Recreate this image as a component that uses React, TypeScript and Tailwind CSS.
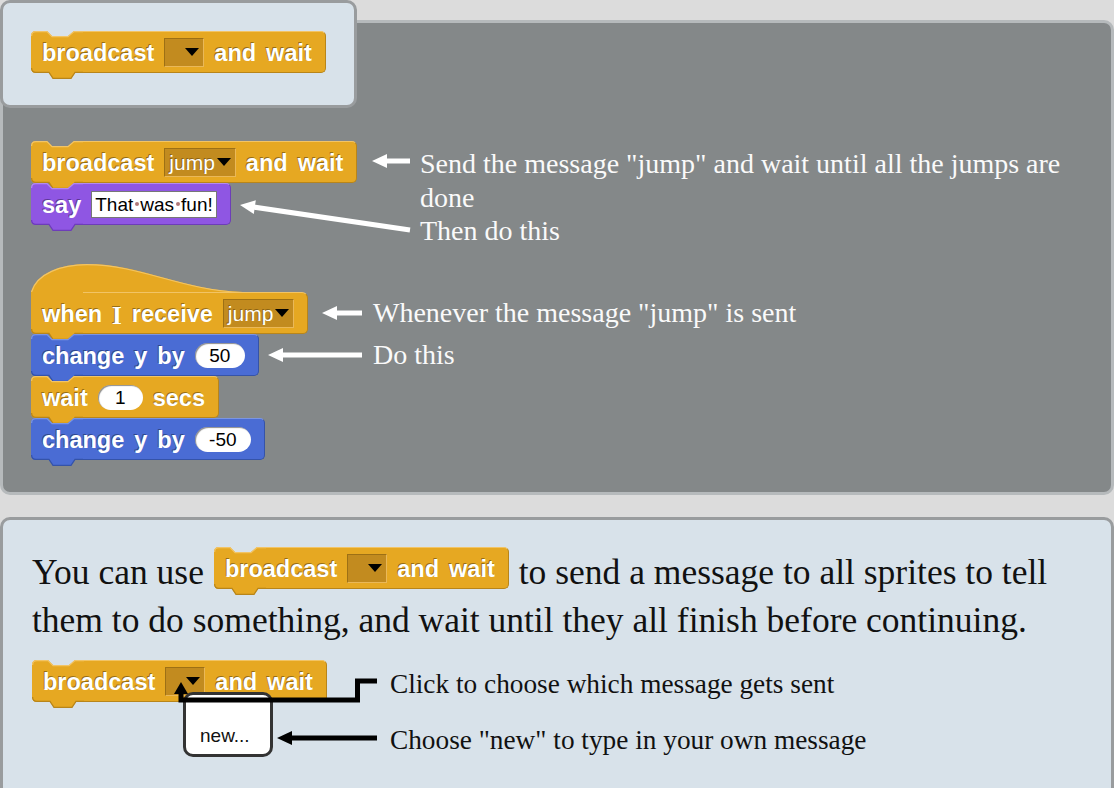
import React from "react";

type Tone = "orange" | "blue" | "purple";

const tones: Record<Tone, { fill: string; light: string; dark: string; body: string }> = {
  orange: {
    fill: "#e6a822",
    light: "#f2c465",
    dark: "#b8851a",
    body: "bg-[#e6a822] border-t border-t-[#f2c465] border-b border-b-[#b8851a] border-r border-r-[#b8851a]",
  },
  blue: {
    fill: "#4a6cd4",
    light: "#7b95e3",
    dark: "#3553a8",
    body: "bg-[#4a6cd4] border-t border-t-[#7b95e3] border-b border-b-[#3553a8] border-r border-r-[#3553a8]",
  },
  purple: {
    fill: "#8f56e3",
    light: "#b38af0",
    dark: "#6d3db8",
    body: "bg-[#8f56e3] border-t border-t-[#b38af0] border-b border-b-[#6d3db8] border-r border-r-[#6d3db8]",
  },
};

const NOTCH = "M0,5 Q0,0 5,0 H16 L21,5 H37 L43,0 H52 V42 H44 L40,48 H22 L18,42 H5 Q0,42 0,37 Z";
const FLAT = "M0,0 H52 V42 H44 L40,48 H22 L18,42 H5 Q0,42 0,37 Z";

function Block({ tone, hat = false, children }: { tone: Tone; hat?: boolean; children: React.ReactNode }) {
  const t = tones[tone];
  return (
    <div className="relative inline-flex h-[42px] items-center pl-[11px] pr-[14px]">
      {hat && (
        <svg width="212" height="29" viewBox="0 0 212 29" className="absolute left-0 bottom-[41px]">
          <path d="M0,29 L0,28 C6,9 30,0 56,0 C110,0 150,26 212,28 L212,29 Z" fill={t.fill} />
          <path d="M0.5,28 C6,9.5 30,0.7 56,0.7 C110,0.7 150,26.5 212,28.5" fill="none" stroke={t.light} strokeWidth="1.2" />
        </svg>
      )}
      <div className="absolute inset-0 flex items-start">
        <svg width="52" height="48" viewBox="0 0 52 48" className="shrink-0">
          <path d={hat ? FLAT : NOTCH} fill={t.fill} />
          {!hat && (
            <path d="M0.6,5 Q0.6,0.6 5,0.6 H16 L21,5.6 H37 L43,0.6 H52" fill="none" stroke={t.light} strokeWidth="1.2" />
          )}
          <path d="M0.6,37 Q0.6,41.4 5,41.4 H18 L22,47.4 H40 L44,41.4 H52" fill="none" stroke={t.dark} strokeWidth="1.2" />
        </svg>
        <div className={`h-[42px] flex-1 rounded-r-[5px] ${t.body} ${hat ? "rounded-tr-[6px]" : ""}`} />
      </div>
      <div className="relative flex items-center gap-[10px]">{children}</div>
    </div>
  );
}

function W({ children }: { children: React.ReactNode }) {
  return (
    <span className="mt-[4px] font-['Liberation_Sans',Arial,sans-serif] text-[23.5px] font-bold leading-none text-white [text-shadow:-1px_-1px_0_rgba(0,0,0,0.35)]">
      {children}
    </span>
  );
}

function Tri() {
  return (
    <svg width="14" height="8" viewBox="0 0 14 8">
      <polygon points="0,0 14,0 7,8" fill="#000" />
    </svg>
  );
}

function Drop({ label }: { label?: string }) {
  return (
    <div className="flex h-[29px] min-w-[40px] items-center justify-end gap-[2px] border border-t-[#9d7015] border-l-[#9d7015] border-b-[#eab858] border-r-[#eab858] bg-[#c28b1f] pl-[4px] pr-[4px]">
      {label && (
        <span className="font-['Liberation_Sans',Arial,sans-serif] text-[21px] leading-none text-white [text-shadow:-1px_-1px_0_rgba(0,0,0,0.3)]">
          {label}
        </span>
      )}
      <Tri />
    </div>
  );
}

function Num({ value, w }: { value: string; w: string }) {
  return (
    <div
      className={`flex h-[25px] ${w} items-center justify-center rounded-full bg-white font-['Liberation_Sans',Arial,sans-serif] text-[19px] leading-none text-black shadow-[inset_1px_1px_1px_rgba(0,0,0,0.45)]`}
    >
      {value}
    </div>
  );
}

function Dot() {
  return <span className="mx-[1.5px] inline-block h-[4px] w-[4px] rounded-full bg-[#b07878] align-middle" />;
}

function BroadcastBlock({ label }: { label?: string }) {
  return (
    <Block tone="orange">
      <W>broadcast</W>
      <Drop label={label} />
      <W>and</W>
      <W>wait</W>
    </Block>
  );
}

export default function App() {
  return (
    <div className="relative h-[788px] w-[1114px] overflow-hidden bg-[#dcdcdc] font-['Liberation_Serif','Times_New_Roman',serif]">
      <div className="pt-[20px]">
        <div className="h-[475px] rounded-[10px] border-[3px] border-[#b6babc] bg-[#848889] pl-[28px] pt-[118px]">
          <div className="flex h-[84px]">
            <div className="flex w-[389px] shrink-0 flex-col items-start">
              <BroadcastBlock label="jump" />
              <Block tone="purple">
                <W>say</W>
                <div className="flex h-[27px] items-center border border-[#777] bg-white px-[3px] font-['Liberation_Sans',Arial,sans-serif] text-[19px] leading-none text-black">
                  That<Dot />was<Dot />fun!
                </div>
              </Block>
            </div>
            <div className="mt-[6px] whitespace-nowrap text-[28px] leading-[33.5px] text-[#fafafa]">
              <div>Send the message "jump" and wait until all the jumps are</div>
              <div>done</div>
              <div>Then do this</div>
            </div>
          </div>

          <div className="mt-[67px] flex">
            <div className="flex w-[342px] shrink-0 flex-col items-start">
              <Block tone="orange" hat>
                <W>when</W>
                <span className="mt-[4px] font-['Liberation_Serif',serif] text-[25px] font-bold leading-none text-white [text-shadow:-1px_-1px_0_rgba(0,0,0,0.35)]">
                  I
                </span>
                <W>receive</W>
                <Drop label="jump" />
              </Block>
              <Block tone="blue">
                <W>change</W>
                <W>y</W>
                <W>by</W>
                <Num value="50" w="w-[50px]" />
              </Block>
              <Block tone="orange">
                <W>wait</W>
                <Num value="1" w="w-[45px]" />
                <W>secs</W>
              </Block>
              <Block tone="blue">
                <W>change</W>
                <W>y</W>
                <W>by</W>
                <Num value="-50" w="w-[56px]" />
              </Block>
            </div>
            <div className="whitespace-nowrap text-[28px] leading-[42px] text-[#fafafa]">
              <div>Whenever the message "jump" is sent</div>
              <div>Do this</div>
            </div>
          </div>
        </div>
      </div>

      <div className="mt-[22px] h-[274px] rounded-t-[10px] border-[3px] border-[#999c9e] bg-[#d8e2ea] pl-[29px] pt-[25px] text-[#111]">
        <div className="flex h-[46px] items-center gap-[10px] whitespace-nowrap text-[35.5px]">
          <span className="mt-[9px]">You can use</span>
          <BroadcastBlock />
          <span className="mt-[9px]">to send a message to all sprites to tell</span>
        </div>
        <div className="mt-[6px] whitespace-nowrap text-[35.5px] leading-[46px]">
          them to do something, and wait until they all finish before continuing.
        </div>
        <div className="mt-[17px] flex">
          <div className="relative w-[358px] shrink-0">
            <BroadcastBlock />
            <div className="absolute left-[151px] top-[32px] flex h-[65px] w-[90px] items-end rounded-[10px] border-[3px] border-[#333] bg-white pb-[9px] pl-[14px] font-['Liberation_Sans',Arial,sans-serif] text-[19px] leading-none text-[#111]">
              new...
            </div>
          </div>
          <div className="-mt-[4px] whitespace-nowrap text-[27.3px] leading-[56px]">
            <div>Click to choose which message gets sent</div>
            <div>Choose "new" to type in your own message</div>
          </div>
        </div>
      </div>

      <div className="absolute left-0 top-0 h-[108px] w-[357px] rounded-[10px] border-[3px] border-[#999c9e] bg-[#d8e2ea] pl-[28px] pt-[28px]">
        <BroadcastBlock />
      </div>

      <svg width="1114" height="788" className="pointer-events-none absolute left-0 top-0">
        <g fill="#fff" stroke="#fff">
          <line x1="384" y1="161" x2="410" y2="161" strokeWidth="5" />
          <polygon points="372,161 387,154 387,168" stroke="none" />
          <line x1="253" y1="207" x2="410" y2="230" strokeWidth="5" />
          <polygon points="240,205 253.8,214.1 255.8,200.3" stroke="none" />
          <line x1="334" y1="313" x2="362" y2="313" strokeWidth="5" />
          <polygon points="322,313 337,306 337,320" stroke="none" />
          <line x1="280" y1="355" x2="362" y2="355" strokeWidth="5" />
          <polygon points="268,355 283,348 283,362" stroke="none" />
        </g>
        <g fill="#000" stroke="#000">
          <polyline points="377,681 357.5,681 357.5,700 181,700 181,692" fill="none" strokeWidth="5" strokeLinejoin="miter" />
          <polygon points="181,682 174,694 188,694" stroke="none" />
          <line x1="289" y1="738" x2="377" y2="738" strokeWidth="5" />
          <polygon points="277,738 292,731 292,745" stroke="none" />
        </g>
      </svg>
    </div>
  );
}
